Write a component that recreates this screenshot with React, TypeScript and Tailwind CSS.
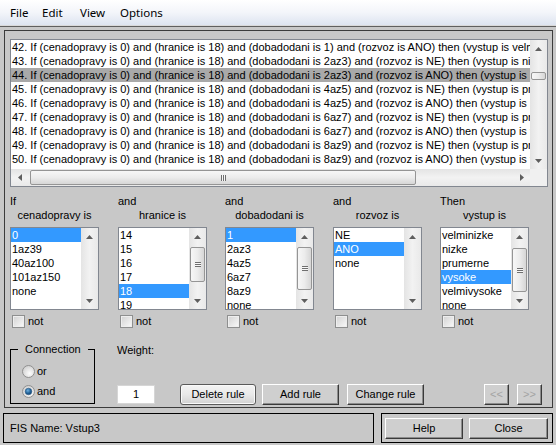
import React from "react";

type Dir = "up" | "down" | "left" | "right";

function Arrow({ dir, color = "#5e5e5e" }: { dir: Dir; color?: string }) {
  const vert = dir === "up" || dir === "down";
  const w = vert ? 7 : 4;
  const h = vert ? 4 : 7;
  const pts = {
    up: "0,4 3.5,0 7,4",
    down: "0,0 3.5,4 7,0",
    left: "4,0 0,3.5 4,7",
    right: "0,0 4,3.5 0,7",
  }[dir];
  return (
    <svg width={w} height={h} viewBox={`0 0 ${w} ${h}`}>
      <polygon points={pts} fill={color} />
    </svg>
  );
}

function VGrip() {
  return (
    <div className="flex flex-col">
      <div className="h-[1px] w-[6px] bg-[#6f6f6f]" />
      <div className="h-[1px] w-[6px] bg-[#f8f8f8]" />
      <div className="h-[1px] w-[6px] bg-[#6f6f6f]" />
      <div className="h-[1px] w-[6px] bg-[#f8f8f8]" />
      <div className="h-[1px] w-[6px] bg-[#6f6f6f]" />
    </div>
  );
}

function HGrip() {
  return (
    <div className="flex">
      <div className="h-[6px] w-[1px] bg-[#6f6f6f]" />
      <div className="h-[6px] w-[1px] bg-[#f8f8f8]" />
      <div className="h-[6px] w-[1px] bg-[#6f6f6f]" />
      <div className="h-[6px] w-[1px] bg-[#f8f8f8]" />
      <div className="h-[6px] w-[1px] bg-[#6f6f6f]" />
    </div>
  );
}

function VScroll({ thumb, grip }: { thumb?: string; grip?: boolean }) {
  return (
    <div className="flex w-[17px] shrink-0 flex-col bg-linear-to-r from-[#e4e4e4] via-[#f2f2f2] to-[#e9e9e9]">
      <div className="flex h-[17px] items-center justify-center">
        <Arrow dir="up" />
      </div>
      <div className="flex flex-1 flex-col">
        {thumb && (
          <div
            className={`mx-[1px] flex items-center justify-center rounded-[2px] border border-[#959595] bg-linear-to-r from-[#f7f7f7] via-[#ececec] to-[#d6d6d6] ${thumb}`}
          >
            {grip && <VGrip />}
          </div>
        )}
      </div>
      <div className="flex h-[17px] items-center justify-center">
        <Arrow dir="down" />
      </div>
    </div>
  );
}

function Checkbox() {
  return (
    <div className="h-[13px] w-[13px] border border-[#8e8f8f] bg-linear-to-br from-[#d2d2d2] to-[#fafafa] shadow-[inset_0_0_0_1px_#eeeeee]" />
  );
}

function Radio({ checked, id }: { checked?: boolean; id: string }) {
  return (
    <svg width="13" height="13" viewBox="0 0 13 13">
      <defs>
        <radialGradient id={`rf${id}`} cx="0.6" cy="0.65" r="0.6">
          <stop offset="0" stopColor="#fdfdfd" />
          <stop offset="1" stopColor="#d4d4d4" />
        </radialGradient>
        <radialGradient id={`rd${id}`} cx="0.4" cy="0.35" r="0.7">
          <stop offset="0" stopColor="#6fb1e0" />
          <stop offset="0.6" stopColor="#1f5f96" />
          <stop offset="1" stopColor="#123f6b" />
        </radialGradient>
      </defs>
      <circle cx="6.5" cy="6.5" r="6" fill={`url(#rf${id})`} stroke="#8f8f8f" />
      {checked && <circle cx="6.5" cy="6.5" r="3.3" fill={`url(#rd${id})`} stroke="#2c5a85" strokeWidth="0.6" />}
    </svg>
  );
}

function ClassicBtn({ w, children, disabled }: { w: string; children: React.ReactNode; disabled?: boolean }) {
  return (
    <div
      className={`flex h-[21px] shrink-0 items-center justify-center border border-t-[#ffffff] border-l-[#ffffff] border-r-[#3a3a3a] border-b-[#3a3a3a] bg-[#cfcfcf] shadow-[inset_-1px_-1px_0_#8c8c8c] ${w} ${disabled ? "text-[#a3a3a3]" : "text-black"}`}
    >
      {children}
    </div>
  );
}

const rules: [number, string, string, string, string, string][] = [
  [42, "0", "18", "1", "ANO", "velminizke"],
  [43, "0", "18", "2az3", "NE", "nizke"],
  [44, "0", "18", "2az3", "ANO", "nizke"],
  [45, "0", "18", "4az5", "NE", "prumerne"],
  [46, "0", "18", "4az5", "ANO", "prumerne"],
  [47, "0", "18", "6az7", "NE", "prumerne"],
  [48, "0", "18", "6az7", "ANO", "vysoke"],
  [49, "0", "18", "8az9", "NE", "prumerne"],
  [50, "0", "18", "8az9", "ANO", "vysoke"],
];

type Col = {
  top: string;
  name: string;
  items: string[];
  sel: number;
  thumb?: string;
  grip?: boolean;
  w: string;
};

const cols: Col[] = [
  { top: "If", name: "cenadopravy is", items: ["0", "1az39", "40az100", "101az150", "none"], sel: 0, w: "w-[108px]" },
  { top: "and", name: "hranice is", items: ["14", "15", "16", "17", "18", "19"], sel: 4, thumb: "mt-[2px] h-[35px]", grip: true, w: "w-[107px]" },
  { top: "and", name: "dobadodani is", items: ["1", "2az3", "4az5", "6az7", "8az9", "none"], sel: 0, thumb: "mt-[2px] h-[43px]", grip: true, w: "w-[108px]" },
  { top: "and", name: "rozvoz is", items: ["NE", "ANO", "none"], sel: 1, w: "w-[107px]" },
  { top: "Then", name: "vystup is", items: ["velminizke", "nizke", "prumerne", "vysoke", "velmivysoke", "none"], sel: 3, thumb: "mt-[3px] h-[44px]", grip: true, w: "w-[89px]" },
];

function Column({ c }: { c: Col }) {
  return (
    <div className={`${c.w} shrink-0`}>
      <div className="h-[14px] leading-[14px]">{c.top}</div>
      <div className="h-[14px] w-[89px] text-center leading-[14px]">{c.name}</div>
      <div className="mt-[5px] flex h-[83px] w-[89px] border border-[#828790] bg-white">
        <div className="min-w-0 flex-1 overflow-hidden">
          {c.items.map((it, i) => (
            <div
              key={it}
              className={`h-[14px] whitespace-nowrap pl-[1px] leading-[14px] ${i === c.sel ? "bg-[#3399ff] text-white" : ""}`}
            >
              {it}
            </div>
          ))}
        </div>
        <VScroll thumb={c.thumb} grip={c.grip} />
      </div>
      <div className="mt-[5px] flex h-[13px] items-center">
        <div className="ml-[2px]">
          <Checkbox />
        </div>
        <span className="ml-[3px] leading-[13px]">not</span>
      </div>
    </div>
  );
}

export default function App() {
  return (
    <div className="flex h-[445px] w-[556px] flex-col overflow-hidden bg-[#c8c8c8] font-['Liberation_Sans',Arial,sans-serif] text-[11px] text-black">
      {/* Menu bar */}
      <div className="flex h-[25px] shrink-0 items-center bg-linear-to-b from-[#ffffff] via-[#f3f5fa] to-[#dde4f0] font-['Noto_Sans',sans-serif] text-[11.5px]">
        <span className="ml-[10px] w-[32px]">File</span>
        <span className="w-[38px]">Edit</span>
        <span className="w-[40px]">View</span>
        <span>Options</span>
      </div>
      <div className="h-[1px] shrink-0 bg-[#d9d9d9]" />
      <div className="h-[1px] shrink-0 bg-[#5f5f5f]" />

      {/* Main frame */}
      <div className="ml-[4px] mt-[3px] flex h-[378px] w-[549px] shrink-0 flex-col border border-[#3c3c3c]">
        {/* Rule list */}
        <div className="ml-[5px] mt-[8px] flex h-[148px] w-[538px] flex-col border border-[#828790] bg-white">
          <div className="flex min-h-0 flex-1">
            <div className="min-w-0 flex-1 overflow-hidden">
              {rules.map(([n, a, b, c, d, e]) => (
                <div
                  key={n}
                  className={`h-[14px] whitespace-nowrap pl-[1px] leading-[14px] ${n === 44 ? "bg-[#a9a9a9]" : ""}`}
                >
                  {`${n}. If (cenadopravy is ${a}) and (hranice is ${b}) and (dobadodani is ${c}) and (rozvoz is ${d}) then (vystup is ${e}) (1)`}
                </div>
              ))}
            </div>
            <VScroll thumb="mt-[15px] h-[8px]" />
          </div>
          <div className="flex h-[17px] shrink-0">
            <div className="flex flex-1 items-center bg-linear-to-b from-[#e4e4e4] via-[#f2f2f2] to-[#e9e9e9]">
              <div className="flex h-[17px] w-[17px] items-center justify-center">
                <Arrow dir="left" />
              </div>
              <div className="ml-[2px] flex h-[15px] w-[386px] items-center justify-center rounded-[2px] border border-[#959595] bg-linear-to-b from-[#f7f7f7] via-[#ececec] to-[#d6d6d6]">
                <HGrip />
              </div>
              <div className="flex-1" />
              <div className="flex h-[17px] w-[17px] items-center justify-center">
                <Arrow dir="right" />
              </div>
            </div>
            <div className="w-[17px] bg-[#f0f0f0]" />
          </div>
        </div>

        {/* Antecedent / consequent columns */}
        <div className="ml-[5px] mt-[7px] flex">
          {cols.map((c, i) => (
            <Column key={i} c={c} />
          ))}
        </div>

        {/* Connection / weight / buttons */}
        <div className="ml-[5px] mt-[14px] flex">
          <fieldset className="h-[62px] w-[85px] shrink-0 border border-black">
            <legend className="ml-[7px] px-[7px] leading-[14px]">Connection</legend>
            <div className="mt-[8px] flex h-[14px] items-center pl-[11px]">
              <Radio id="or" />
              <span className="ml-[2px]">or</span>
            </div>
            <div className="mt-[6px] flex h-[14px] items-center pl-[11px]">
              <Radio id="and" checked />
              <span className="ml-[2px]">and</span>
            </div>
          </fieldset>
          <div className="ml-[22px] flex flex-col">
            <div className="mt-[1px] h-[14px] leading-[14px]">Weight:</div>
            <div className="mt-[27px] flex items-center">
              <div className="flex h-[19px] w-[38px] shrink-0 items-center justify-center border border-[#d6d6d6] bg-white">
                1
              </div>
              <div className="ml-[25px] flex h-[21px] w-[76px] shrink-0 items-center justify-center rounded-[3px] border border-[#5a5a5a] bg-linear-to-b from-[#f4f4f4] via-[#e9e9e9] to-[#d2d2d2] shadow-[inset_0_0_0_1px_#fafafa]">
                Delete rule
              </div>
              <div className="ml-[6px]">
                <ClassicBtn w="w-[77px]">Add rule</ClassicBtn>
              </div>
              <div className="ml-[8px]">
                <ClassicBtn w="w-[77px]">Change rule</ClassicBtn>
              </div>
              <div className="ml-[60px]">
                <ClassicBtn w="w-[25px]" disabled>
                  &lt;&lt;
                </ClassicBtn>
              </div>
              <div className="ml-[8px]">
                <ClassicBtn w="w-[25px]" disabled>
                  &gt;&gt;
                </ClassicBtn>
              </div>
            </div>
          </div>
        </div>
      </div>

      {/* Bottom frames */}
      <div className="mt-[5px] flex h-[30px] shrink-0">
        <div className="ml-[3px] flex w-[371px] items-center border border-black pl-[6px]">FIS Name: Vstup3</div>
        <div className="ml-[7px] flex w-[172px] items-center border border-black pl-[3px]">
          <ClassicBtn w="w-[78px]">Help</ClassicBtn>
          <div className="ml-[6px]">
            <ClassicBtn w="w-[79px]">Close</ClassicBtn>
          </div>
        </div>
      </div>
    </div>
  );
}
